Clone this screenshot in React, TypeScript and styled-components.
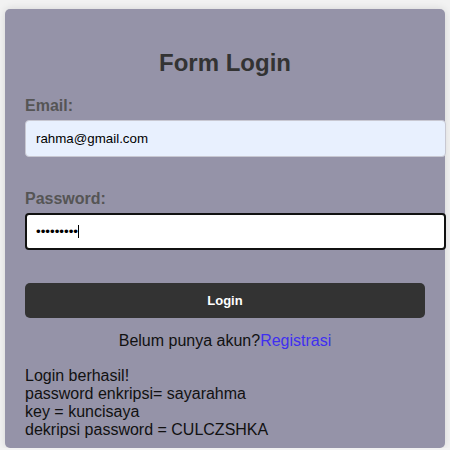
import React from "react";
import styled, { createGlobalStyle } from "styled-components";

const GlobalStyle = createGlobalStyle`
  html, body {
    margin: 0;
    padding: 0;
    background: #f2f2f2;
    font-family: "Liberation Sans", Arial, sans-serif;
  }
  * { box-sizing: border-box; }
`;

const Card = styled.div`
  width: 440px;
  margin: 9px auto 0;
  padding: 20px 20px 9px;
  background: #9593a8;
  border-radius: 5px;
  box-shadow: 0 0 8px rgba(0, 0, 0, 0.12);
`;

const Title = styled.h2`
  margin: 20px 0;
  font-size: 24px;
  line-height: 28px;
  font-weight: bold;
  text-align: center;
  color: #333;
`;

const Group = styled.div`
  margin-bottom: 33px;
`;

const Label = styled.label`
  display: block;
  margin-bottom: 5px;
  font-size: 16px;
  line-height: 18px;
  font-weight: bold;
  color: #555;
`;

const Field = styled.div`
  position: relative;
  width: calc(100% + 21px);
`;

const Input = styled.input<{ $focused?: boolean; $filled?: boolean }>`
  display: block;
  width: 100%;
  height: 37px;
  padding: 0 10px;
  border: ${(p) => (p.$focused ? "2px solid #111" : "1px solid #c8c8d2")};
  padding-left: ${(p) => (p.$focused ? "9px" : "10px")};
  border-radius: 4px;
  background: ${(p) => (p.$filled ? "#e8f0fe" : "#fff")};
  font-family: "Liberation Sans", Arial, sans-serif;
  font-size: 13.33px;
  color: #000;
  outline: none;
  caret-color: transparent;
`;

const Caret = styled.span`
  position: absolute;
  left: 53px;
  top: 12px;
  width: 1px;
  height: 13px;
  background: #000;
`;

const Button = styled.button`
  display: block;
  width: 100%;
  height: 35px;
  border: none;
  border-radius: 5px;
  background: #333;
  color: #fff;
  font-family: "Liberation Sans", Arial, sans-serif;
  font-size: 13px;
  font-weight: bold;
`;

const Register = styled.p`
  margin: 14px 0 0;
  font-size: 16px;
  line-height: 18px;
  text-align: center;
  color: #111;
`;

const Link = styled.a`
  color: #3f2ff0;
  text-decoration: none;
`;

const Message = styled.p`
  margin: 17px 0 0;
  font-size: 16px;
  line-height: 18px;
  color: #111;
`;

export default function App() {
  return (
    <>
      <GlobalStyle />
      <Card>
        <Title>Form Login</Title>
        <Group>
          <Label>Email:</Label>
          <Field>
            <Input type="email" defaultValue="rahma@gmail.com" $filled readOnly />
          </Field>
        </Group>
        <Group>
          <Label>Password:</Label>
          <Field>
            <Input type="password" defaultValue="sayarahma" $focused readOnly />
            <Caret />
          </Field>
        </Group>
        <Button>Login</Button>
        <Register>
          Belum punya akun?<Link href="#">Registrasi</Link>
        </Register>
        <Message>
          Login berhasil!
          <br />
          password enkripsi= sayarahma
          <br />
          key = kuncisaya
          <br />
          dekripsi password = CULCZSHKA
        </Message>
      </Card>
    </>
  );
}
